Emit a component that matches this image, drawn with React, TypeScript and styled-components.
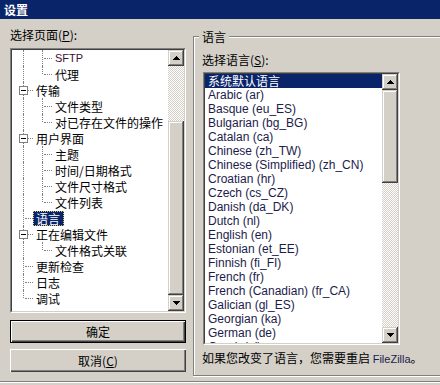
import React from "react";
import styled, { createGlobalStyle } from "styled-components";

const Global = createGlobalStyle`
  html, body { margin: 0; padding: 0; background: #d4d0c8; overflow: hidden; }
  body { font-family: "Liberation Sans", "Noto Sans CJK SC", sans-serif; font-size: 12px; color: #000; }
`;

const Window = styled.div`
  width: 440px;
  height: 385px;
  display: flex;
  flex-direction: column;
  background: #d4d0c8;
  overflow: hidden;
`;

const TitleBar = styled.div`
  height: 19px;
  flex: 0 0 19px;
  background: #0a246a;
  display: flex;
  align-items: center;
  padding-left: 4px;
`;

const Title = styled.span`
  color: #fff;
  font-weight: bold;
  font-size: 12px;
  font-family: "Noto Sans CJK SC", sans-serif;
  line-height: 14px;
`;

const Body = styled.div`
  height: 362px;
  flex: 0 0 362px;
  display: flex;
  padding-left: 10px;
`;

const BottomEdge = styled.div`
  flex: 1;
  border-top: 1px solid #808080;
  box-shadow: inset 0 1px 0 #fff;
`;

const LeftColumn = styled.div`
  width: 176px;
  flex: 0 0 176px;
  display: flex;
  flex-direction: column;
`;

const FieldLabel = styled.div<{ $mt: number }>`
  margin-top: ${(p) => p.$mt}px;
  height: 14px;
  line-height: 14px;
  font-size: 12px;
  font-family: "Noto Sans CJK SC", sans-serif;
  white-space: nowrap;
  u { text-decoration: underline; text-underline-offset: 1px; }
`;

const Sunken = styled.div<{ $w: number; $h: number; $mt: number; $ml?: number }>`
  width: ${(p) => p.$w}px;
  height: ${(p) => p.$h}px;
  margin-top: ${(p) => p.$mt}px;
  margin-left: ${(p) => p.$ml ?? 0}px;
  box-sizing: border-box;
  border: 1px solid;
  border-color: #808080 #fff #fff #808080;
  flex: 0 0 auto;
`;

const SunkenInner = styled.div`
  height: 100%;
  box-sizing: border-box;
  border: 1px solid;
  border-color: #404040 #d4d0c8 #d4d0c8 #404040;
  background: #fff;
  display: flex;
  overflow: hidden;
`;

const Tree = styled.div`
  flex: 1;
  min-width: 0;
  padding-left: 2px;
  overflow: hidden;
`;

const TreeRow = styled.div`
  height: 16px;
  display: flex;
  align-items: center;
  white-space: nowrap;
`;

type GuideKind = "line" | "tee" | "corner";

const Guide = styled.span<{ $kind: GuideKind }>`
  position: relative;
  flex: 0 0 19px;
  width: 19px;
  height: 16px;
  &::before {
    content: "";
    position: absolute;
    left: 9px;
    top: 0;
    height: ${(p) => (p.$kind === "corner" ? 8 : 16)}px;
    border-left: 1px dotted #808080;
  }
  &::after {
    content: ${(p) => (p.$kind === "line" ? "none" : "''")};
    position: absolute;
    left: 11px;
    top: 8px;
    width: 8px;
    border-top: 1px dotted #808080;
  }
`;

const Expander = styled.span`
  position: absolute;
  left: 5px;
  top: 4px;
  width: 9px;
  height: 9px;
  box-sizing: border-box;
  border: 1px solid #808080;
  background: #fff;
  z-index: 1;
  &::after {
    content: "";
    position: absolute;
    left: 1px;
    top: 3px;
    width: 5px;
    height: 1px;
    background: #000;
  }
`;

const NodeLabel = styled.span<{ $selected?: boolean; $latin?: boolean }>`
  height: 15px;
  line-height: 15px;
  padding: 0 4px 0 3px;
  font-family: ${(p) =>
    p.$latin ? '"Liberation Sans", sans-serif' : '"Noto Sans CJK SC", sans-serif'};
  font-size: ${(p) => (p.$latin ? 11 : 12)}px;
  color: ${(p) => (p.$selected ? "#fff" : p.$latin ? "#3a1030" : "#000")};
  background: ${(p) => (p.$selected ? "#0a246a" : "transparent")};
  outline: ${(p) => (p.$selected ? "1px dotted #d8c870" : "none")};
  outline-offset: -1px;
`;

const ScrollBar = styled.div`
  width: 16px;
  flex: 0 0 16px;
  display: flex;
  flex-direction: column;
`;

const raised = `
  background: #d4d0c8;
  box-shadow: inset -1px -1px 0 #404040, inset 1px 1px 0 #d4d0c8,
    inset -2px -2px 0 #808080, inset 2px 2px 0 #fff;
`;

const ArrowButton = styled.div`
  height: 16px;
  flex: 0 0 16px;
  ${raised}
  display: flex;
  align-items: center;
  justify-content: center;
`;

const Track = styled.div<{ $h?: number }>`
  ${(p) => (p.$h !== undefined ? `height: ${p.$h}px; flex: 0 0 ${p.$h}px;` : "flex: 1;")}
  background-color: #d4d0c8;
  background-image: conic-gradient(#fff 25%, #d4d0c8 0 50%, #fff 0 75%, #d4d0c8 0);
  background-size: 2px 2px;
`;

const Thumb = styled.div<{ $h: number }>`
  height: ${(p) => p.$h}px;
  flex: 0 0 ${(p) => p.$h}px;
  ${raised}
`;

const Arrow = ({ down }: { down?: boolean }) => (
  <svg width="7" height="4" viewBox="0 0 7 4" style={{ display: "block", marginTop: down ? 0 : -1 }}>
    <polygon points={down ? "0,0 7,0 3.5,4" : "3.5,0 7,4 0,4"} fill="#000" shapeRendering="crispEdges" />
  </svg>
);

const Button = styled.div<{ $default?: boolean; $mt: number }>`
  margin-top: ${(p) => p.$mt}px;
  height: 23px;
  flex: 0 0 23px;
  box-sizing: border-box;
  display: flex;
  align-items: center;
  justify-content: center;
  font-family: "Noto Sans CJK SC", sans-serif;
  font-size: 12px;
  background: #d4d0c8;
  border: ${(p) => (p.$default ? "1px solid #000" : "none")};
  box-shadow: inset 1px 1px 0 #fff, inset -1px -1px 0 #404040, inset -2px -2px 0 #808080;
  u { text-decoration: underline; }
`;

const Group = styled.div`
  margin-top: 17px;
  margin-left: 7px;
  width: 270px;
  height: 340px;
  box-sizing: border-box;
  border: 1px solid #808080;
  border-right: none;
  box-shadow: inset 1px 1px 0 #fff, 0 1px 0 #fff;
  padding: 0 0 0 5px;
  display: flex;
  flex-direction: column;
`;

const Legend = styled.div`
  display: block;
  width: fit-content;
  margin-top: -7px;
  height: 14px;
  line-height: 14px;
  padding: 0 3px;
  background: #d4d0c8;
  font-family: "Noto Sans CJK SC", sans-serif;
  font-size: 12px;
`;

const GroupContent = styled.div`
  padding-left: 3px;
  display: flex;
  flex-direction: column;
`;

const List = styled.div`
  width: 177px;
  flex: 0 0 177px;
  overflow: hidden;
`;

const ListItem = styled.div<{ $selected?: boolean; $cjk?: boolean }>`
  height: 14px;
  line-height: 14px;
  padding-left: 3px;
  white-space: nowrap;
  font-family: ${(p) =>
    p.$cjk ? '"Noto Sans CJK SC", sans-serif' : '"Liberation Sans", sans-serif'};
  font-size: 12px;
  color: ${(p) => (p.$selected ? "#fff" : "#1c1c4c")};
  background: ${(p) => (p.$selected ? "#0a246a" : "transparent")};
`;

const Note = styled.div`
  margin-top: 6px;
  height: 14px;
  line-height: 14px;
  white-space: nowrap;
  font-family: "Noto Sans CJK SC", sans-serif;
  font-size: 12px;
`;

const Latin = styled.span`
  font-family: "Liberation Sans", sans-serif;
  font-size: 11px;
  color: #1c1c4c;
`;

type TreeNode = {
  label: string;
  guides: GuideKind[];
  expander?: boolean;
  selected?: boolean;
  latin?: boolean;
};

const treeRows: TreeNode[] = [
  { label: "SFTP", guides: ["line", "tee"], latin: true },
  { label: "代理", guides: ["line", "corner"] },
  { label: "传输", guides: ["tee"], expander: true },
  { label: "文件类型", guides: ["line", "tee"] },
  { label: "对已存在文件的操作", guides: ["line", "corner"] },
  { label: "用户界面", guides: ["tee"], expander: true },
  { label: "主题", guides: ["line", "tee"] },
  { label: "时间/日期格式", guides: ["line", "tee"] },
  { label: "文件尺寸格式", guides: ["line", "tee"] },
  { label: "文件列表", guides: ["line", "corner"] },
  { label: "语言", guides: ["tee"], selected: true },
  { label: "正在编辑文件", guides: ["tee"], expander: true },
  { label: "文件格式关联", guides: ["line", "corner"] },
  { label: "更新检查", guides: ["tee"] },
  { label: "日志", guides: ["tee"] },
  { label: "调试", guides: ["corner"] },
];

const languages = [
  "系统默认语言",
  "Arabic (ar)",
  "Basque (eu_ES)",
  "Bulgarian (bg_BG)",
  "Catalan (ca)",
  "Chinese (zh_TW)",
  "Chinese (Simplified) (zh_CN)",
  "Croatian (hr)",
  "Czech (cs_CZ)",
  "Danish (da_DK)",
  "Dutch (nl)",
  "English (en)",
  "Estonian (et_EE)",
  "Finnish (fi_FI)",
  "French (fr)",
  "French (Canadian) (fr_CA)",
  "Galician (gl_ES)",
  "Georgian (ka)",
  "German (de)",
  "Greek (el)",
];

export default function App() {
  return (
    <>
      <Global />
      <Window>
        <TitleBar>
          <Title>设置</Title>
        </TitleBar>
        <Body>
          <LeftColumn>
            <FieldLabel $mt={9}>
              选择页面(<u>P</u>):
            </FieldLabel>
            <Sunken $w={176} $h={265} $mt={6}>
              <SunkenInner>
                <Tree>
                  {treeRows.map((r, i) => (
                    <TreeRow key={i}>
                      {r.guides.map((g, j) => (
                        <Guide key={j} $kind={g}>
                          {r.expander && j === r.guides.length - 1 && <Expander />}
                        </Guide>
                      ))}
                      <NodeLabel $selected={r.selected} $latin={r.latin}>
                        {r.label}
                      </NodeLabel>
                    </TreeRow>
                  ))}
                </Tree>
                <ScrollBar>
                  <ArrowButton>
                    <Arrow />
                  </ArrowButton>
                  <Track $h={55} />
                  <Thumb $h={174} />
                  <Track />
                  <ArrowButton>
                    <Arrow down />
                  </ArrowButton>
                </ScrollBar>
              </SunkenInner>
            </Sunken>
            <Button $default $mt={7}>
              确定
            </Button>
            <Button $mt={6}>
              取消(<u>C</u>)
            </Button>
          </LeftColumn>
          <Group>
            <Legend>语言</Legend>
            <GroupContent>
              <FieldLabel $mt={9}>
                选择语言(<u>S</u>):
              </FieldLabel>
              <Sunken $w={197} $h={273} $mt={5} $ml={1}>
                <SunkenInner>
                  <List>
                    {languages.map((l, i) => (
                      <ListItem key={i} $selected={i === 0} $cjk={i === 0}>
                        {l}
                      </ListItem>
                    ))}
                  </List>
                  <ScrollBar>
                    <ArrowButton>
                      <Arrow />
                    </ArrowButton>
                    <Thumb $h={93} />
                    <Track />
                    <ArrowButton>
                      <Arrow down />
                    </ArrowButton>
                  </ScrollBar>
                </SunkenInner>
              </Sunken>
              <Note>
                如果您改变了语言，您需要重启 <Latin>FileZilla</Latin>。
              </Note>
            </GroupContent>
          </Group>
        </Body>
        <BottomEdge />
      </Window>
    </>
  );
}
